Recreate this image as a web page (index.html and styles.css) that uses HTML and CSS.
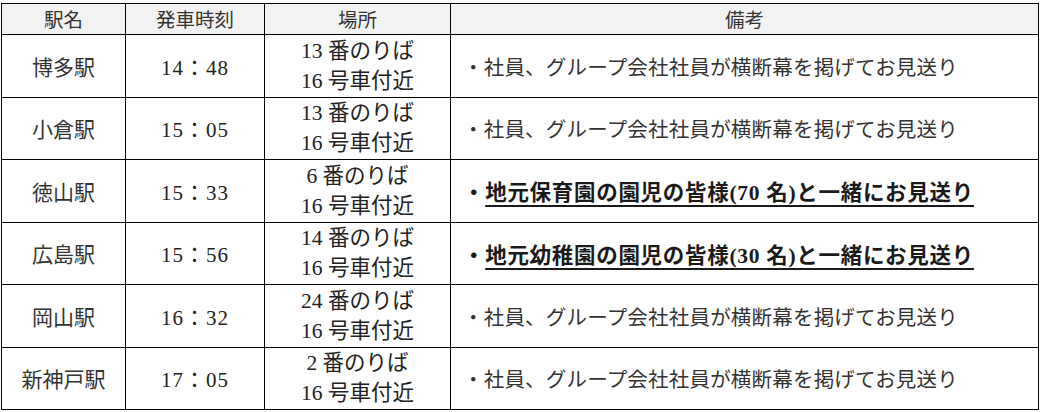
FILE: index.html
```html
<!DOCTYPE html>
<html lang="ja">
<head>
<meta charset="utf-8">
<title>お見送り</title>
<link rel="stylesheet" href="styles.css">
</head>
<body>
<table class="sched">
  <colgroup>
    <col class="c-st">
    <col class="c-time">
    <col class="c-place">
    <col class="c-note">
  </colgroup>
  <thead>
    <tr class="head">
      <th>駅名</th>
      <th>発車時刻</th>
      <th>場所</th>
      <th>備考</th>
    </tr>
  </thead>
  <tbody>
    <tr>
      <td class="st">博多駅</td>
      <td class="time">14：48</td>
      <td class="place">13 番のりば<br>16 号車付近</td>
      <td class="note">・社員、グループ会社社員が横断幕を掲げてお見送り</td>
    </tr>
    <tr>
      <td class="st">小倉駅</td>
      <td class="time">15：05</td>
      <td class="place">13 番のりば<br>16 号車付近</td>
      <td class="note">・社員、グループ会社社員が横断幕を掲げてお見送り</td>
    </tr>
    <tr>
      <td class="st">徳山駅</td>
      <td class="time">15：33</td>
      <td class="place">6 番のりば<br>16 号車付近</td>
      <td class="note strong">・<span class="ul">地元保育園の園児の皆様(70 名)と一緒にお見送り</span></td>
    </tr>
    <tr>
      <td class="st">広島駅</td>
      <td class="time">15：56</td>
      <td class="place">14 番のりば<br>16 号車付近</td>
      <td class="note strong">・<span class="ul">地元幼稚園の園児の皆様(30 名)と一緒にお見送り</span></td>
    </tr>
    <tr>
      <td class="st">岡山駅</td>
      <td class="time">16：32</td>
      <td class="place">24 番のりば<br>16 号車付近</td>
      <td class="note">・社員、グループ会社社員が横断幕を掲げてお見送り</td>
    </tr>
    <tr>
      <td class="st">新神戸駅</td>
      <td class="time">17：05</td>
      <td class="place">2 番のりば<br>16 号車付近</td>
      <td class="note">・社員、グループ会社社員が横断幕を掲げてお見送り</td>
    </tr>
  </tbody>
</table>
</body>
</html>
```

FILE: styles.css
```css
html, body {
  margin: 0;
  padding: 0;
  background: #ffffff;
}

body {
  padding: 3px 0 0 1px;
  color: #222222;
  font-family: "Noto Sans CJK JP", "Noto Sans", sans-serif;
}

.sched {
  border-collapse: collapse;
  table-layout: fixed;
  width: 1037px;
}

.c-st { width: 124px; }
.c-time { width: 139px; }
.c-place { width: 186px; }
.c-note { width: 588px; }

.sched th,
.sched td {
  border: 1px solid #000000;
  padding: 0;
  vertical-align: middle;
}

.head th {
  height: 30px;
  background: #f2f2f2;
  font-weight: 400;
  font-size: 19.5px;
  line-height: 28px;
  color: #333333;
  text-align: center;
}

.sched tbody td {
  height: 61.5px;
}

.st {
  text-align: center;
  font-size: 21px;
  color: #333333;
}

.time {
  text-align: center;
  font-family: "Liberation Serif", "Noto Sans CJK JP", serif;
  font-size: 21px;
  letter-spacing: 1px;
}

.place {
  text-align: center;
  font-family: "Liberation Serif", "Noto Sans CJK JP", serif;
  font-size: 21.5px;
  line-height: 30px;
}

.note {
  text-align: left;
  padding-left: 12px !important;
  font-size: 20.5px;
  letter-spacing: 0.2px;
  color: #333333;
}

.note.strong {
  font-family: "Liberation Serif", "Noto Sans CJK JP", serif;
  font-weight: 700;
  font-size: 21.5px;
  letter-spacing: 0.7px;
  color: #1a1a1a;
}

.ul {
  text-decoration: underline;
  text-underline-offset: 5px;
  text-decoration-thickness: 1.5px;
}
```
